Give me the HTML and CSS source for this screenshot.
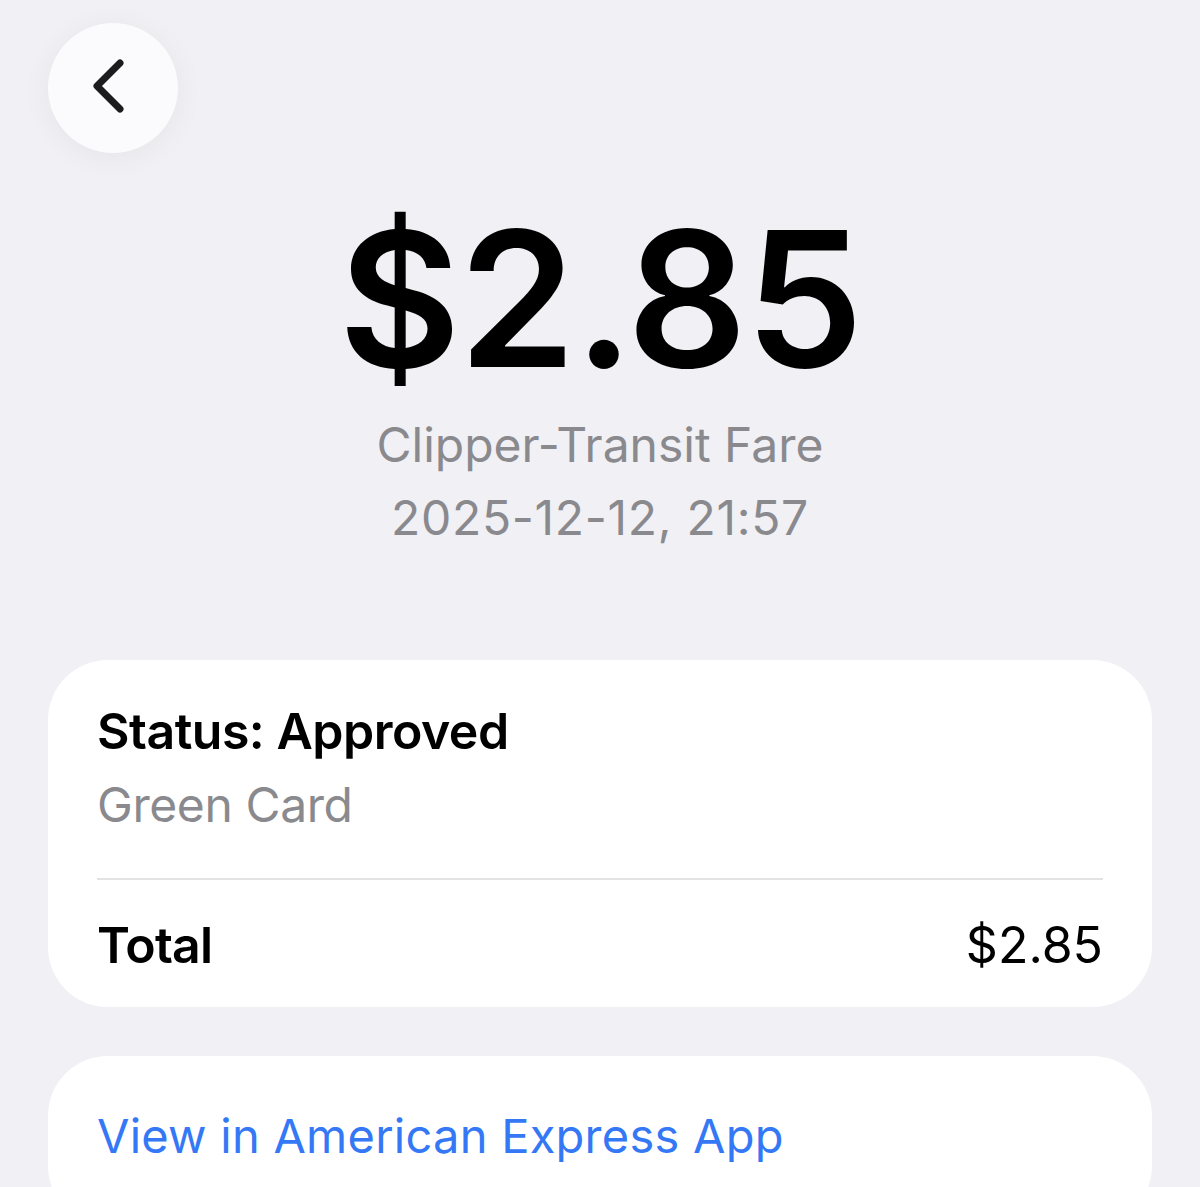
FILE: index.html
```html
<!DOCTYPE html>
<html lang="en">
<head>
<meta charset="utf-8">
<title>Transaction</title>
<link rel="stylesheet" href="styles.css">
</head>
<body>
<div class="page">
  <div class="topbar">
    <button class="back" aria-label="Back">
      <svg width="40" height="60" viewBox="0 0 40 60" aria-hidden="true">
        <path d="M30 5 L7 28 L30 51" fill="none" stroke="#1c1c1e" stroke-width="7" stroke-linecap="round" stroke-linejoin="round"/>
      </svg>
    </button>
  </div>
  <div class="hero">
    <div class="amount">$2.85</div>
    <div class="merchant">Clipper-Transit Fare</div>
    <div class="date">2025-12-12, 21:57</div>
  </div>
  <div class="card details">
    <div class="status">Status: Approved</div>
    <div class="cardname">Green Card</div>
    <div class="divider"></div>
    <div class="total-row">
      <span>Total</span>
      <span>$2.85</span>
    </div>
  </div>
  <div class="card link-card">
    <a class="link" href="#">View in American Express App</a>
  </div>
</div>
</body>
</html>
```
FILE: styles.css
```css
html, body {
  margin: 0;
  padding: 0;
  background: #f0f0f5;
  font-family: Inter, "Noto Sans", sans-serif;
  color: #000;
  overflow: hidden;
}
.page {
  padding: 0 48px;
  height: 1187px;
  box-sizing: border-box;
}
.topbar {
  padding-top: 23px;
  display: flex;
}
.back {
  width: 130px;
  height: 130px;
  border-radius: 50%;
  border: none;
  background: #fbfbfd;
  box-shadow: 0 4px 30px rgba(0, 0, 0, 0.05);
  display: flex;
  align-items: center;
  justify-content: center;
  padding: 0 6px 0 0;
}
.hero {
  text-align: center;
  margin-top: 52px;
}
.amount {
  font-size: 188px;
  line-height: 188px;
  font-weight: 600;
  letter-spacing: -2px;
}
.merchant, .date {
  font-size: 48px;
  line-height: 73px;
  color: #8a8a8e;
}
.merchant {
  margin-top: 15px;
}
.date {
  letter-spacing: 0.7px;
}
.card {
  background: #fff;
  border-radius: 60px;
}
.details {
  margin-top: 106px;
  padding: 35px 49px 32px 49px;
}
.status {
  font-size: 50px;
  line-height: 73px;
  font-weight: 600;
  letter-spacing: -0.5px;
}
.cardname {
  font-size: 48px;
  line-height: 73px;
  color: #8a8a8e;
  letter-spacing: -0.4px;
}
.divider {
  height: 2px;
  background: #e3e3e6;
  margin-top: 37px;
}
.total-row {
  margin-top: 35px;
  display: flex;
  justify-content: space-between;
  font-size: 50px;
  line-height: 60px;
}
.total-row span:first-child {
  font-weight: 600;
  letter-spacing: -0.8px;
}
.link-card {
  margin-top: 49px;
  padding: 50px 49px 60px;
}
.link {
  font-size: 47px;
  line-height: 60px;
  color: #3478f6;
  text-decoration: none;
  letter-spacing: 0.25px;
}
```
